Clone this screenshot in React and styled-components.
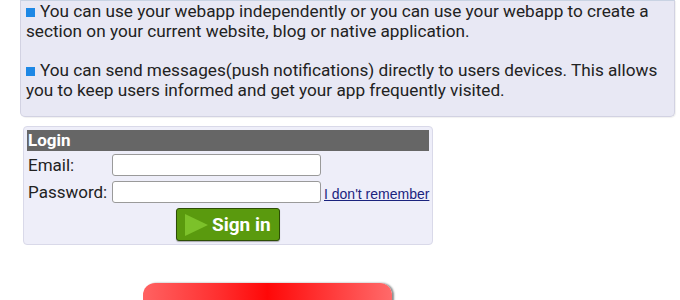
import React from 'react';
import styled, { createGlobalStyle } from 'styled-components';

const Global = createGlobalStyle`
  body { margin: 0; background: #fff; font-family: Roboto, "Liberation Sans", Arial, sans-serif; color: #222; }
  * { box-sizing: border-box; }
`;

const Page = styled.div` width: 680px; height: 300px; overflow: hidden; padding: 0 5px 0 20px; `;
const InfoBox = styled.div` background: #e8e8f4; border: 1px solid #d2d2e2; border-top-color: #c9d3e3; border-radius: 0 0 5px 5px; padding: 0 10px 16px 5px; box-shadow: 1px 1px 1px rgba(0,0,0,0.06); `;
const Para = styled.p` margin: ${p => (p.first ? '0' : '19px')} 0 0; font-size: 17.2px; line-height: 20px; color: #222; `;
const Bullet = styled.span` display: inline-block; width: 9px; height: 9px; background: #1e88e5; margin-right: 5px; vertical-align: 0px; `;

const LoginBox = styled.form` width: 410px; margin: 9px 0 0 3px; background: #eeeef9; border: 1px solid #d9d9e9; border-radius: 4px; padding: 3px; `;
const Header = styled.div` background: #666; color: #fff; font-weight: bold; font-size: 17px; line-height: 21px; height: 21px; padding-left: 1px; `;
const Fields = styled.div` display: grid; grid-template-columns: 84px 209px auto; row-gap: 5px; align-items: center; margin-top: 3px; padding-left: 1px; `;
const Label = styled.label` font-size: 17px; color: #222; `;
const Input = styled.input` width: 209px; height: 22px; border: 1px solid #9a9a9a; border-radius: 3px; background: #fff; padding: 0 4px; `;
const Forgot = styled.a` font-family: "Liberation Sans", Arial, sans-serif; font-size: 14px; color: #1a237e; text-decoration: underline; margin-left: 3px; align-self: end; line-height: 17px; white-space: nowrap; `;
const ButtonRow = styled.div` display: flex; justify-content: center; margin-top: 5px; `;
const SignIn = styled.button` display: flex; align-items: center; gap: 4px; width: 104px; height: 33px; background: #5a9a0e; border: 1px solid #2d4d06; border-radius: 3px; color: #fff; font-family: Roboto, "Liberation Sans", sans-serif; font-weight: bold; font-size: 19px; padding: 0 0 0 8px; box-shadow: 0 1px 1px rgba(0,0,0,0.3); `;

const RedButton = styled.div` width: 249px; height: 40px; margin: 38px 0 0 123px; border-radius: 12px 12px 0 0; background: linear-gradient(90deg, #ff6262 0%, #ff3030 30%, #ff0808 50%, #ff3030 70%, #ff6a6a 100%); box-shadow: 2px 0 2px rgba(0,0,0,0.45); `;

export default function App() {
  return (
    <Page>
      <Global />
      <InfoBox>
        <Para first><Bullet />You can use your webapp independently or you can use your webapp to create a section on your current website, blog or native application.</Para>
        <Para><Bullet />You can send messages(push notifications) directly to users devices. This allows you to keep users informed and get your app frequently visited.</Para>
      </InfoBox>
      <LoginBox onSubmit={e => e.preventDefault()}>
        <Header>Login</Header>
        <Fields>
          <Label>Email:</Label>
          <Input type="email" />
          <span />
          <Label>Password:</Label>
          <Input type="password" />
          <Forgot href="#">I don't remember</Forgot>
        </Fields>
        <ButtonRow>
          <SignIn type="submit">
            <svg width="23" height="22" viewBox="0 0 23 22"><polygon points="0,0 23,11 0,22" fill="#7cc12a" /></svg>
            Sign in
          </SignIn>
        </ButtonRow>
      </LoginBox>
      <RedButton />
    </Page>
  );
}
